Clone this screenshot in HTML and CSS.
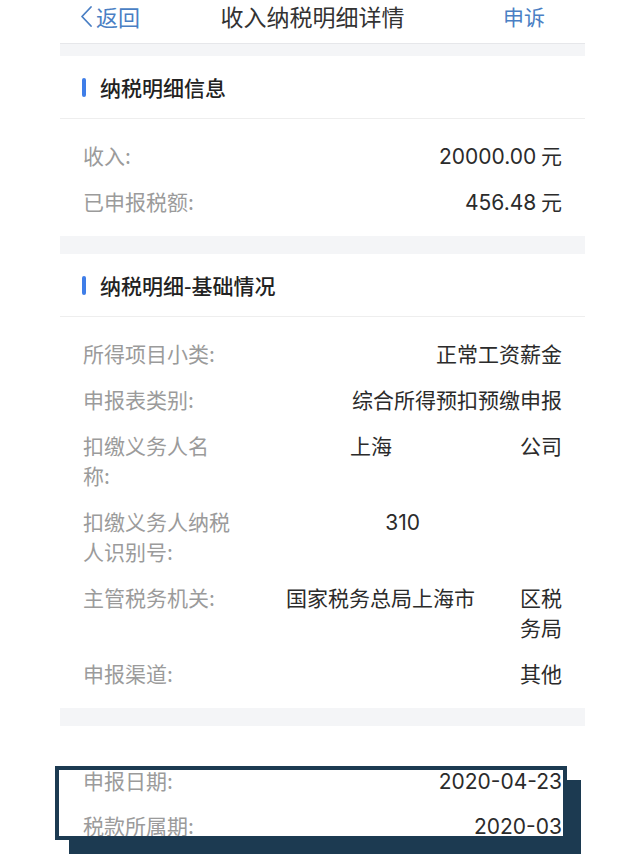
FILE: index.html
```html
<!DOCTYPE html>
<html lang="zh-CN">
<head>
    <meta charset="UTF-8">
    <meta name="viewport" content="width=device-width, initial-scale=1.0">
    <title>收入纳税明细详情</title>
    <link rel="stylesheet" href="styles.css">
</head>
<body>
    <div class="page">
        <div class="nav">
            <a class="back">
                <svg class="chevron" width="13" height="23" viewBox="0 0 13 23"><polyline points="11,2 2,11.5 11,21" fill="none" stroke="#4a7fc4" stroke-width="1.8" stroke-linecap="round" stroke-linejoin="round"/></svg>
                返回
            </a>
            <div class="title">收入纳税明细详情</div>
            <a class="action">申诉</a>
        </div>

        <div class="band first"></div>
        <div class="section-head"><span class="bar"></span>纳税明细信息</div>
        <div class="rows">
            <div class="row"><div class="label">收入:</div><div class="value"><span class="num">20000.00</span> 元</div></div>
            <div class="row"><div class="label">已申报税额:</div><div class="value"><span class="num">456.48</span> 元</div></div>
        </div>

        <div class="band"></div>
        <div class="section-head"><span class="bar"></span>纳税明细-基础情况</div>
        <div class="rows">
            <div class="row"><div class="label">所得项目小类:</div><div class="value">正常工资薪金</div></div>
            <div class="row"><div class="label">申报表类别:</div><div class="value">综合所得预扣预缴申报</div></div>
            <div class="row"><div class="label">扣缴义务人名称:</div><div class="value">上海<span class="gap wide"></span>公司</div></div>
            <div class="row"><div class="label">扣缴义务人纳税人识别号:</div><div class="value"><span class="num">310</span><span class="gap id"></span></div></div>
            <div class="row"><div class="label">主管税务机关:</div><div class="value">国家税务总局上海市<span class="gap small"></span>区税<br>务局</div></div>
            <div class="row"><div class="label">申报渠道:</div><div class="value">其他</div></div>
        </div>

        <div class="band"></div>
        <div class="rows dates">
            <div class="row"><div class="label">申报日期:</div><div class="value"><span class="num">2020-04-23</span></div></div>
            <div class="row"><div class="label">税款所属期:</div><div class="value"><span class="num">2020-03</span></div></div>
            <div class="frame"></div>
        </div>
    </div>
</body>
</html>
```

FILE: styles.css
```css
body {
    margin: 0;
    background: #fff;
    font-family: "Noto Sans CJK SC", "Noto Sans", sans-serif;
    color: #333;
}
.page {
    width: 525px;
    margin-left: 60px;
}
.nav {
    height: 43px;
    box-sizing: border-box;
    display: grid;
    grid-template-columns: 1fr auto 1fr;
    grid-template-rows: 33px;
    align-items: center;
    padding: 0 40px 0 20px;
    line-height: 33px;
}
.back {
    display: flex;
    align-items: center;
    color: #4a7fc4;
    font-size: 22px;
}
.chevron {
    margin: 0 3px 0 0;
}
.title {
    font-size: 23px;
    color: #333;
}
.action {
    justify-self: end;
    color: #4a7fc4;
    font-size: 21px;
}
.band {
    height: 18px;
    background: #f4f5f7;
}
.band.first {
    height: 13px;
    box-sizing: border-box;
    border-top: 1px solid #e6e7ea;
}
.section-head {
    height: 63px;
    box-sizing: border-box;
    border-bottom: 1px solid #eeeeee;
    display: flex;
    align-items: center;
    padding-left: 22px;
    font-size: 21px;
    font-weight: 500;
    color: #222;
}
.bar {
    width: 4px;
    height: 19px;
    border-radius: 2px;
    background: #3f7ee8;
    margin-right: 14px;
}
.rows {
    display: flex;
    flex-direction: column;
    gap: 16px;
    padding: 21px 23px 20px 23px;
}
.rows.dates {
    position: relative;
    gap: 15px;
    padding-top: 39px;
    padding-bottom: 21px;
}
.row {
    display: flex;
    font-size: 21px;
    line-height: 30px;
}
.label {
    width: 150px;
    flex-shrink: 0;
    color: #9b9b9b;
}
.value {
    flex: 1;
    text-align: right;
    color: #2b2b2b;
}
.num {
    font-family: Inter, "Liberation Sans", sans-serif;
    line-height: 1;
}
.gap {
    display: inline-block;
}
.gap.wide {
    width: 128px;
}
.gap.id {
    width: 142px;
}
.gap.small {
    width: 45px;
}
.frame {
    position: absolute;
    top: 40px;
    left: -5px;
    width: 512px;
    height: 74px;
    box-sizing: border-box;
    border: 4px solid #1c3a51;
    box-shadow: 14px 14px 0 #1c3a51;
}
```
